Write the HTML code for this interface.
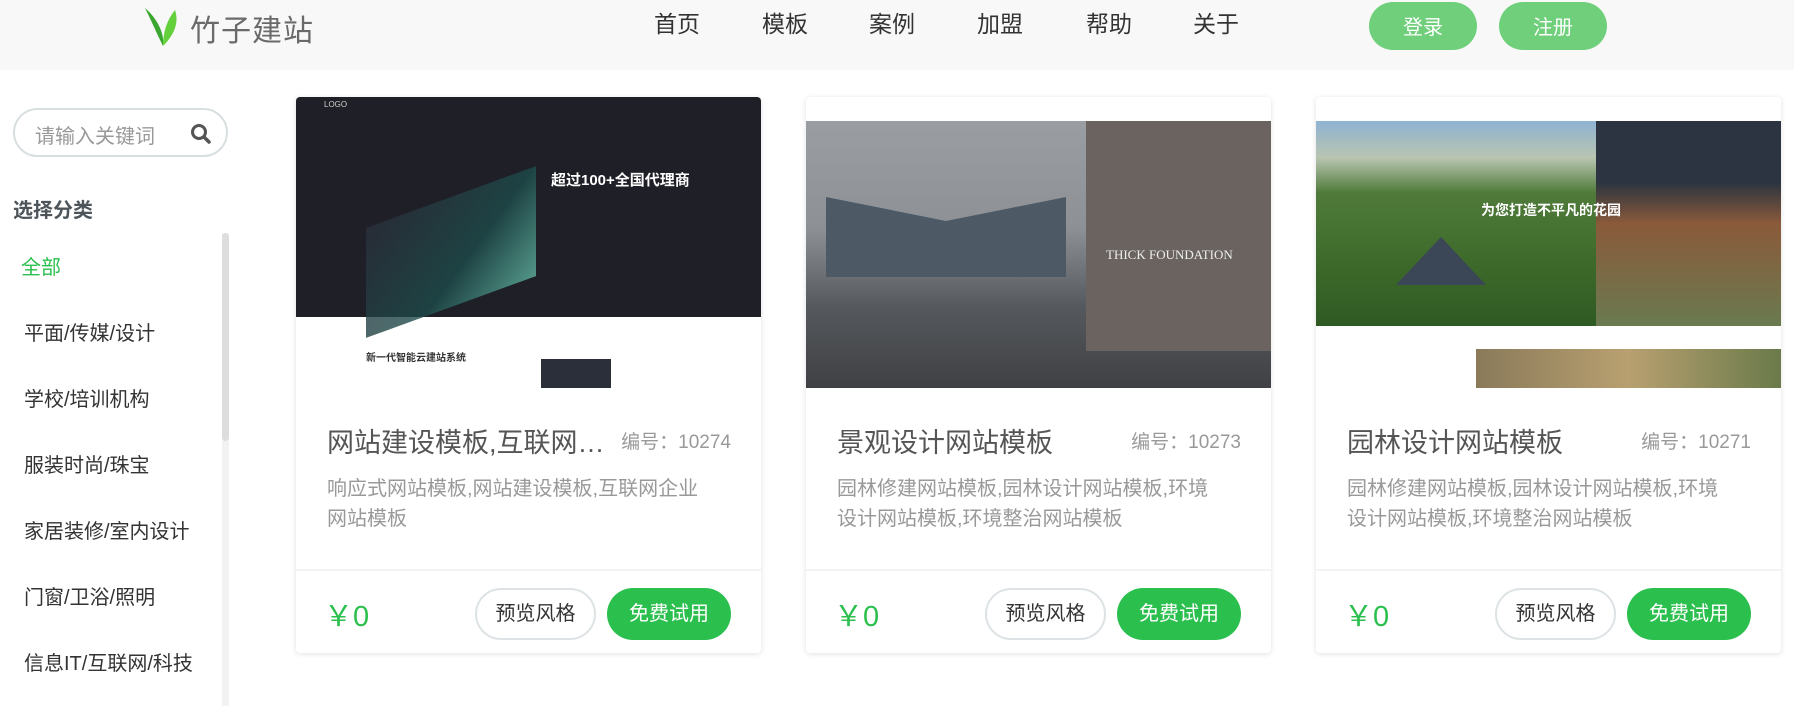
<!DOCTYPE html>
<html><head><meta charset="utf-8"><style>
*{margin:0;padding:0;box-sizing:border-box}
body{width:1794px;height:706px;overflow:hidden;background:#fff;font-family:"Liberation Sans","Noto Sans CJK SC",sans-serif;position:relative}
.hd{position:absolute;left:0;top:0;width:1794px;height:70px;background:#f8f8f8}
.logo{position:absolute;left:190px;top:6px;font-size:30px;color:#6a6a6a;letter-spacing:1px}
.nav{position:absolute;top:5px;font-size:23px;color:#333}
.hbtn{position:absolute;top:2px;width:108px;height:48px;border-radius:24px;background:#6fcf7a;color:#fff;font-size:20px;text-align:center;line-height:52px}
.search{position:absolute;left:13px;top:108px;width:215px;height:49px;border:2px solid #d7dfe0;border-radius:25px;font-size:20px;color:#999;padding:10px 0 0 20px;overflow:hidden;white-space:nowrap}
.search span{display:inline-block;width:132px;overflow:hidden}
.cat{position:absolute;left:13px;top:194px;font-size:20px;font-weight:bold;color:#4d555b}
.sb{position:absolute;left:222px;top:233px;width:7px;height:208px;background:#ddd;border-radius:3px}
.sbt{position:absolute;left:222px;top:441px;width:7px;height:265px;background:#f2f2f2}
.li{position:absolute;left:24px;font-size:20px;color:#333}
.card{position:absolute;top:97px;width:465px;height:556px;background:#fff;box-shadow:0 1px 6px rgba(0,0,0,.12);border-radius:4px;overflow:hidden}
.img{position:absolute;left:0;top:0;width:465px;height:291px;overflow:hidden}
.t{position:absolute;left:31px;top:324px;font-size:27px;color:#555;white-space:nowrap}
.no{position:absolute;right:30px;top:330px;font-size:19px;color:#999}
.d{position:absolute;left:31px;top:377px;width:378px;font-size:20px;line-height:30px;color:#999}
.line{position:absolute;left:0;top:472px;width:465px;height:2px;background:#f3f3f3}
.pr{position:absolute;left:28px;top:496px;font-size:29px;color:#2bbf4e}
.b1{position:absolute;left:179px;top:491px;width:121px;height:52px;border:2px solid #dde3e5;border-radius:26px;font-size:20px;color:#333;text-align:center;line-height:48px}
.b2{position:absolute;left:311px;top:491px;width:124px;height:52px;border-radius:26px;background:#2bbf4e;font-size:20px;color:#fff;text-align:center;line-height:52px}
</style></head><body>
<div class="hd">
<svg style="position:absolute;left:143px;top:6px" width="40" height="42" viewBox="0 0 40 42"><path d="M2 2 C8 14 14 28 20 40 C22 28 14 12 2 2Z" fill="#3aa62f"/><path d="M20 40 C32 28 36 16 32 4 C24 14 20 26 20 40Z" fill="#63d03c"/></svg>
<div class="logo">竹子建站</div>
<div class="nav" style="left:654px">首页</div>
<div class="nav" style="left:762px">模板</div>
<div class="nav" style="left:869px">案例</div>
<div class="nav" style="left:977px">加盟</div>
<div class="nav" style="left:1086px">帮助</div>
<div class="nav" style="left:1193px">关于</div>
<div class="hbtn" style="left:1369px">登录</div>
<div class="hbtn" style="left:1499px">注册</div>
</div>
<div class="search"><span>请输入关键词</span><svg style="position:absolute;left:175px;top:13px" width="22" height="22" viewBox="0 0 22 22"><circle cx="9" cy="9" r="6.5" fill="none" stroke="#555" stroke-width="3"/><path d="M14 14l5 5" stroke="#555" stroke-width="3.5" stroke-linecap="round"/></svg></div>
<div class="cat">选择分类</div>
<div class="sbt"></div><div class="sb"></div>
<div class="li" style="left:21px;top:251px;color:#2bbf4e">全部</div>
<div class="li" style="top:317px">平面/传媒/设计</div>
<div class="li" style="top:383px">学校/培训机构</div>
<div class="li" style="top:449px">服装时尚/珠宝</div>
<div class="li" style="top:515px">家居装修/室内设计</div>
<div class="li" style="top:581px">门窗/卫浴/照明</div>
<div class="li" style="top:647px">信息IT/互联网/科技</div>

<div class="card" style="left:296px">
<div class="img" style="background:#fff">
<div style="position:absolute;left:0;top:0;width:465px;height:220px;background:#1f1f27"></div>
<div style="position:absolute;left:28px;top:3px;font-size:8px;color:#ccc">LOGO</div>
<div style="position:absolute;left:255px;top:72px;font-size:15px;font-weight:bold;color:#fff">超过100+全国代理商</div>
<div style="position:absolute;left:70px;top:100px;width:170px;height:110px;background:linear-gradient(135deg,#2a2f3a,#1d4b4a 60%,#5fb3a0);transform:skewY(-20deg);opacity:.8"></div>
<div style="position:absolute;left:70px;top:252px;font-size:10px;font-weight:bold;color:#333">新一代智能云建站系统</div>
<div style="position:absolute;left:245px;top:262px;width:70px;height:29px;background:#2b2f3a"></div>
</div>
<div class="t">网站建设模板,互联网…</div><div class="no">编号：10274</div>
<div class="d">响应式网站模板,网站建设模板,互联网企业网站模板</div>
<div class="line"></div><div class="pr">￥0</div><div class="b1">预览风格</div><div class="b2">免费试用</div>
</div>

<div class="card" style="left:806px">
<div class="img" style="background:#fff">
<div style="position:absolute;left:0;top:24px;width:465px;height:267px;background:linear-gradient(180deg,#9a9ea2 0%,#8d9196 40%,#55585c 70%,#3f4144 100%)"></div>
<div style="position:absolute;left:280px;top:24px;width:185px;height:230px;background:#6a6360"></div>
<div style="position:absolute;left:20px;top:100px;width:240px;height:80px;background:#4d5a66;clip-path:polygon(0 0,50% 30%,100% 0,100% 100%,0 100%)"></div>
<div style="position:absolute;left:300px;top:150px;font-size:13px;color:#eee;font-family:'Liberation Serif',serif">THICK FOUNDATION</div>
</div>
<div class="t">景观设计网站模板</div><div class="no">编号：10273</div>
<div class="d">园林修建网站模板,园林设计网站模板,环境设计网站模板,环境整治网站模板</div>
<div class="line"></div><div class="pr">￥0</div><div class="b1">预览风格</div><div class="b2">免费试用</div>
</div>

<div class="card" style="left:1316px">
<div class="img" style="background:#fff">
<div style="position:absolute;left:0;top:24px;width:465px;height:205px;background:linear-gradient(180deg,#8fb3d3 0%,#b8c4b0 18%,#4f7a3a 35%,#3d6a2a 70%,#2f5a24 100%)"></div>
<div style="position:absolute;left:280px;top:24px;width:185px;height:205px;background:linear-gradient(180deg,#2b3440 0%,#2b3440 30%,#8a5a3a 50%,#6a7a50 100%)"></div>
<div style="position:absolute;left:80px;top:140px;width:90px;height:60px;background:#3b4656;clip-path:polygon(50% 0,100% 80%,0 80%)"></div>
<div style="position:absolute;left:165px;top:103px;font-size:14px;font-weight:bold;color:#fff">为您打造不平凡的花园</div>
<div style="position:absolute;left:160px;top:252px;width:305px;height:39px;background:linear-gradient(90deg,#8a7a5a,#b8a070,#6a7a4a)"></div>
</div>
<div class="t">园林设计网站模板</div><div class="no">编号：10271</div>
<div class="d">园林修建网站模板,园林设计网站模板,环境设计网站模板,环境整治网站模板</div>
<div class="line"></div><div class="pr">￥0</div><div class="b1">预览风格</div><div class="b2">免费试用</div>
</div>
</body></html>
